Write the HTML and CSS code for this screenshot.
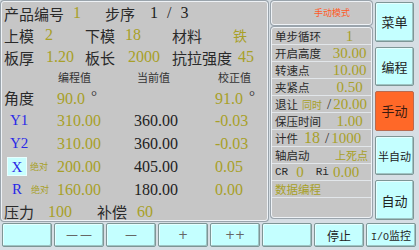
FILE: index.html
```html
<!DOCTYPE html>
<html lang="zh-CN">
<head>
  <meta charset="UTF-8" />
  <title>折弯机控制面板</title>
  <link rel="stylesheet" href="styles.css">
</head>
<body>
  <div class="main">
    <div class="params">
      <div class="row r1">
        <span class="lbl">产品编号</span><span class="val">1</span>
        <span class="lbl">步序</span><span class="num steps">1 / 3</span>
      </div>
      <div class="row r2">
        <span class="lbl">上模</span><span class="val">2</span>
        <span class="lbl">下模</span><span class="val">18</span>
        <span class="lbl">材料</span><span class="val cjk">铁</span>
      </div>
      <div class="row r3">
        <span class="lbl">板厚</span><span class="val">1.20</span>
        <span class="lbl">板长</span><span class="val">2000</span>
        <span class="lbl">抗拉强度</span><span class="val">45</span>
      </div>
      <div class="row head">
        <span></span><span>编程值</span><span>当前值</span><span>校正值</span>
      </div>
      <div class="row data">
        <span class="lbl">角度</span>
        <span class="val">90.0<span class="deg">°</span></span>
        <span></span>
        <span class="val">91.0<span class="deg">°</span></span>
      </div>
      <div class="row data">
        <span class="axis">Y1</span>
        <span class="val">310.00</span><span class="num">360.00</span><span class="val">-0.03</span>
      </div>
      <div class="row data">
        <span class="axis">Y2</span>
        <span class="val">310.00</span><span class="num">360.00</span><span class="val">-0.03</span>
      </div>
      <div class="row data">
        <span class="axis"><span class="sel">X</span><span class="abs">绝对</span></span>
        <span class="val">200.00</span><span class="num">405.00</span><span class="val">0.05</span>
      </div>
      <div class="row data">
        <span class="axis r-axis">R<span class="abs">绝对</span></span>
        <span class="val">160.00</span><span class="num">180.00</span><span class="val">0.00</span>
      </div>
      <div class="row last">
        <span class="lbl">压力</span><span class="val">100</span>
        <span class="lbl">补偿</span><span class="val">60</span>
      </div>
    </div>

    <div class="status">
      <div class="mode">手动模式</div>
      <div class="list">
        <div class="item"><span class="name">单步循环</span><span class="v">1</span></div>
        <div class="item"><span class="name">开启高度</span><span class="v">30.00</span></div>
        <div class="item"><span class="name">转速点</span><span class="v">10.00</span></div>
        <div class="item"><span class="name">夹紧点</span><span class="v">0.50</span></div>
        <div class="item mixed">
          <span class="name">退让</span><span class="small">同时</span><span class="slash">/</span><span class="olive">20.00</span>
        </div>
        <div class="item"><span class="name">保压时间</span><span class="v">1.00</span></div>
        <div class="item mixed">
          <span class="name">计件</span><span class="count">18</span><span class="slash">/</span><span class="olive">1000</span>
        </div>
        <div class="item"><span class="name">轴启动</span><span class="v cjk">上死点</span></div>
        <div class="item"><span class="mono">CR</span><span class="v0">0</span><span class="mono">Ri</span><span class="v1">0.00</span></div>
        <div class="item"><span class="name olive">数据编程</span></div>
        <div class="item"></div>
      </div>
    </div>

    <div class="menu">
      <button class="btn">菜单</button>
      <button class="btn">编程</button>
      <button class="btn active">手动</button>
      <button class="btn narrow">半自动</button>
      <button class="btn">自动</button>
    </div>
  </div>

  <div class="bar">
    <button class="btn"></button>
    <button class="btn sign dashes">— —</button>
    <button class="btn sign">—</button>
    <button class="btn sign">+</button>
    <button class="btn sign">++</button>
    <button class="btn"></button>
    <button class="btn">停止</button>
    <button class="btn io"><span class="mono">I/O</span>监控</button>
  </div>
</body>
</html>
```

FILE: styles.css
```css
body {
  margin: 0;
  width: 419px;
  height: 250px;
  overflow: hidden;
  background-color: #d6dee4;
  font-family: 'Liberation Serif', 'Noto Sans CJK SC', serif;
  color: #222;
}
.main {
  display: flex;
  gap: 3px;
  height: 222px;
  padding: 1px 0 0 1px;
  box-sizing: border-box;
}
.params {
  width: 267px;
  height: 220px;
  box-sizing: border-box;
  background-color: #c6c6c6;
  border: 1px solid #eef2f6;
  border-radius: 3px;
  box-shadow: 0 0 0 1px #9aa4ac;
}
.row {
  display: grid;
  align-items: center;
  padding-left: 2px;
  font-size: 16px;
}
.r1, .r2, .r3 { height: 22px; }
.r1 { grid-template-columns: 69px 32px 45px auto; }
.r2 { grid-template-columns: 41px 40px 40px 47px 61px auto; }
.r3 { grid-template-columns: 42px 39px 43px 44px 66px auto; }
.steps { word-spacing: 5px; }
.head {
  height: 18px;
  grid-template-columns: 54px 79px 81px auto;
  font-family: 'Noto Sans CJK SC', sans-serif;
  font-size: 11px;
  color: #333;
}
.data {
  height: 23px;
  grid-template-columns: 53px 77px 81px auto;
}
.last {
  height: 19px;
  grid-template-columns: 44px 49px 40px auto;
}
.lbl {
  font-family: 'Noto Sans CJK SC', sans-serif;
  font-size: 15px;
  color: #2a2a2a;
}
.val { color: #a8a028; }
.val.cjk { font-family: 'Noto Sans CJK SC', sans-serif; font-size: 14px; }
.num { color: #1e1e1e; }
.deg {
  margin-left: 6px;
  font-size: 15px;
  vertical-align: 3px;
  color: #333;
}
.axis {
  display: flex;
  align-items: center;
  padding-left: 6px;
  font-size: 15px;
  color: #2a2ae6;
}
.r-axis { padding-left: 8px; }
.sel {
  width: 20px;
  height: 19px;
  margin-left: -3px;
  line-height: 19px;
  text-align: center;
  background-color: #c8ffff;
  border: 1px solid #e8ffff;
  box-sizing: border-box;
}
.abs {
  margin-left: 3px;
  font-family: 'Noto Sans CJK SC', sans-serif;
  font-size: 9px;
  color: #a8a028;
}
.r-axis .abs { margin-left: 9px; }

.status {
  width: 101px;
  display: flex;
  flex-direction: column;
  gap: 2px;
}
.mode {
  height: 24px;
  box-sizing: border-box;
  background-color: #c6c6c6;
  border: 1px solid #eef2f6;
  border-radius: 3px;
  box-shadow: 0 0 0 1px #9aa4ac;
  text-align: right;
  padding-right: 21px;
  line-height: 21px;
  font-family: 'Noto Sans CJK SC', sans-serif;
  font-size: 9px;
  color: #ff5a28;
}
.list {
  height: 191px;
  box-sizing: border-box;
  background-color: #c6c6c6;
  border: 1px solid #eef2f6;
  border-radius: 3px;
  box-shadow: 0 0 0 1px #9aa4ac;
}
.item {
  display: flex;
  align-items: center;
  height: 17px;
  padding-left: 3px;
  border-bottom: 1px solid #e2e6ea;
  box-sizing: border-box;
  font-size: 15px;
  white-space: nowrap;
}
.item:last-child { border-bottom: none; }
.name {
  width: 56px;
  flex: none;
  font-family: 'Noto Sans CJK SC', sans-serif;
  font-size: 11.5px;
  color: #2a2a2a;
}
.mixed .name { width: 27px; }
.item .name:only-child { width: auto; }
.v {
  flex: 1;
  text-align: center;
  padding-right: 3px;
  color: #a8a028;
}
.v.cjk {
  font-family: 'Noto Sans CJK SC', sans-serif;
  font-size: 11px;
  text-align: right;
  padding-right: 3px;
}
.small {
  font-family: 'Noto Sans CJK SC', sans-serif;
  font-size: 10px;
  color: #a8a028;
}
.count {
  color: #a8a028;
  font-size: 16px;
  margin-left: 2px;
}
.slash {
  color: #333;
  margin: 0 2px 0 5px;
}
.olive { color: #a8a028; }
.mono {
  font-family: 'Liberation Mono', monospace;
  font-size: 11px;
  color: #2a2a2a;
}
.v0 { color: #a8a028; margin: 0 12px 0 8px; }
.v1 { color: #a8a028; margin-left: 4px; }

.menu {
  width: 39px;
  padding-top: 1px;
  height: 219px;
  box-sizing: border-box;
  display: flex;
  flex-direction: column;
  gap: 5px;
}
.btn {
  margin: 0;
  padding: 0;
  background-color: #c4ffff;
  border: 1px solid #7e9696;
  border-radius: 2px;
  box-shadow: inset -1px -1px 0 #9ec4c4, inset 1px 1px 0 #e4ffff;
  font-family: 'Noto Sans CJK SC', sans-serif;
  font-size: 13px;
  color: #222;
  white-space: nowrap;
  cursor: pointer;
}
.menu .btn { flex: 1; }
.menu .narrow { font-size: 11px; }
.btn.active {
  background-color: #ff6828;
  border-color: #b86a50;
  box-shadow: none;
  color: #3a1a10;
}
.bar {
  display: flex;
  gap: 2px;
  padding: 1px 0 0 2px;
}
.bar .btn {
  width: 50px;
  height: 24px;
  font-size: 12px;
}
.bar .sign {
  font-family: 'DejaVu Sans', sans-serif;
  font-size: 12px;
  color: #666;
}
.bar .dashes { word-spacing: -2px; }
.bar .io { font-size: 11px; }
.bar .mono { font-size: 10px; }
```
